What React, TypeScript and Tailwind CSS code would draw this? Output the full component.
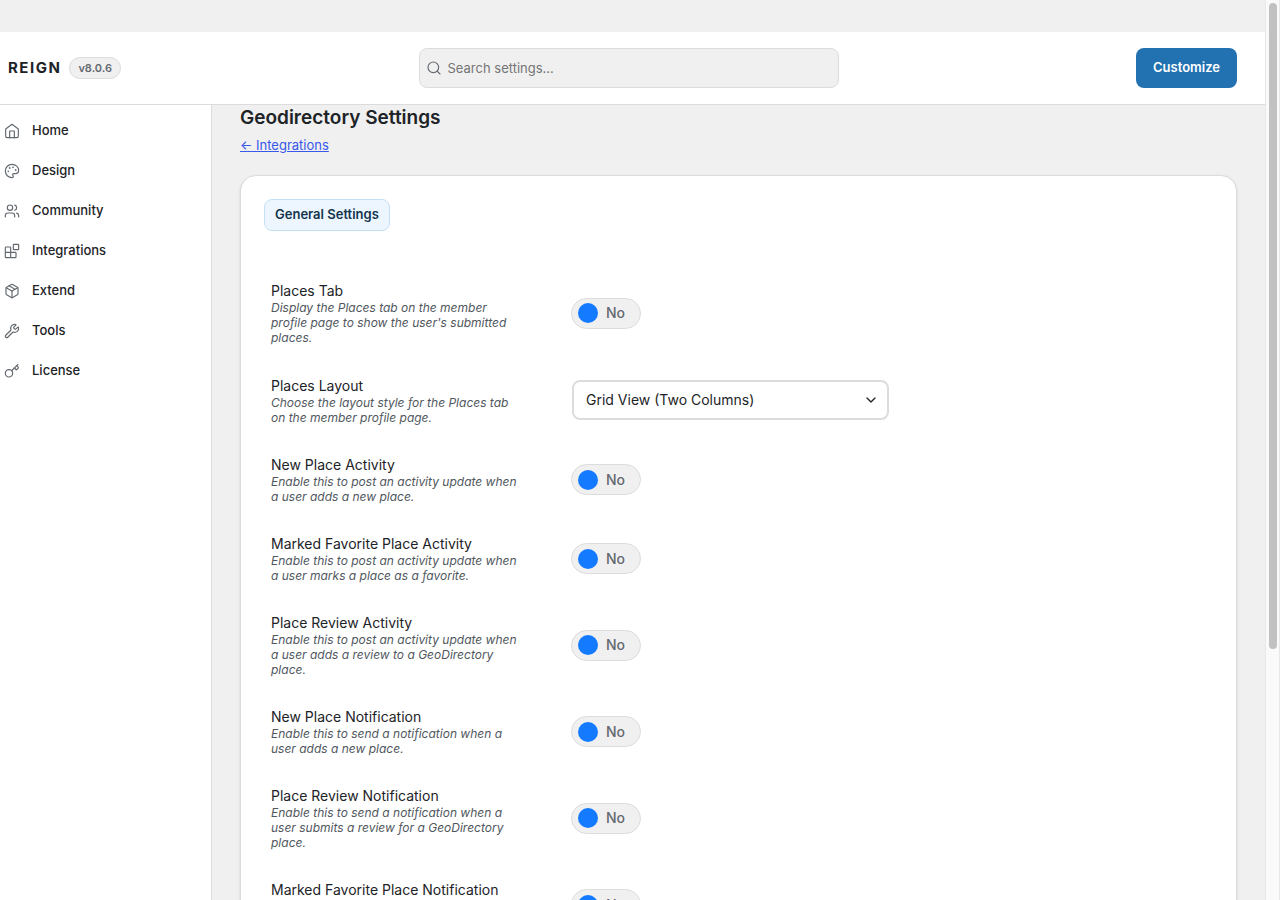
import { useState } from 'react';
import { ChevronDown, Key, Package, Palette, Search, Users, Wrench } from 'lucide-react';

type IconProps = { className?: string; strokeWidth?: number };

function HomeIcon({ className, strokeWidth }: IconProps) {
  return (
    <svg
      viewBox="0 0 24 24"
      fill="none"
      stroke="currentColor"
      strokeWidth={strokeWidth}
      strokeLinecap="round"
      strokeLinejoin="round"
      className={className}
      aria-hidden="true"
    >
      <path d="m2.5 9 9.5-7 9.5 7v11a2 2 0 0 1-2 2h-15a2 2 0 0 1-2-2z" />
      <path d="M8.5 22V12h7v10" />
    </svg>
  );
}

function BlocksIcon({ className, strokeWidth }: IconProps) {
  return (
    <svg
      viewBox="0 0 24 24"
      fill="none"
      stroke="currentColor"
      strokeWidth={strokeWidth}
      strokeLinecap="round"
      strokeLinejoin="round"
      className={className}
      aria-hidden="true"
    >
      <rect width="8" height="8" x="14" y="2" rx="1" />
      <path d="M10 22V7a1 1 0 0 0-1-1H3a1 1 0 0 0-1 1v14a1 1 0 0 0 1 1h14a1 1 0 0 0 1-1v-6a1 1 0 0 0-1-1H2" />
    </svg>
  );
}

const NAV_ITEMS = [
  { label: 'Home', icon: HomeIcon },
  { label: 'Design', icon: Palette },
  { label: 'Community', icon: Users },
  { label: 'Integrations', icon: BlocksIcon },
  { label: 'Extend', icon: Package },
  { label: 'Tools', icon: Wrench },
  { label: 'License', icon: Key },
];

type Setting = {
  id: string;
  title: string;
  description: string;
  options?: string[];
};

const SETTINGS: Setting[] = [
  {
    id: 'places-tab',
    title: 'Places Tab',
    description: "Display the Places tab on the member profile page to show the user's submitted places.",
  },
  {
    id: 'places-layout',
    title: 'Places Layout',
    description: 'Choose the layout style for the Places tab on the member profile page.',
    options: ['Grid View (Two Columns)'],
  },
  {
    id: 'new-place-activity',
    title: 'New Place Activity',
    description: 'Enable this to post an activity update when a user adds a new place.',
  },
  {
    id: 'favorite-place-activity',
    title: 'Marked Favorite Place Activity',
    description: 'Enable this to post an activity update when a user marks a place as a favorite.',
  },
  {
    id: 'place-review-activity',
    title: 'Place Review Activity',
    description: 'Enable this to post an activity update when a user adds a review to a GeoDirectory place.',
  },
  {
    id: 'new-place-notification',
    title: 'New Place Notification',
    description: 'Enable this to send a notification when a user adds a new place.',
  },
  {
    id: 'place-review-notification',
    title: 'Place Review Notification',
    description: 'Enable this to send a notification when a user submits a review for a GeoDirectory place.',
  },
  {
    id: 'favorite-place-notification',
    title: 'Marked Favorite Place Notification',
    description: 'Enable this to send a notification when a user marks a place as a favorite.',
  },
];

function Toggle({ id }: { id: string }) {
  const [checked, setChecked] = useState(false);

  return (
    <label className="relative inline-flex h-[31px] w-[70px] cursor-pointer items-center gap-2 rounded-full border border-[#dcdcde] bg-[#f0f0f0] px-[6px]">
      <input
        id={id}
        type="checkbox"
        checked={checked}
        onChange={(e) => setChecked(e.target.checked)}
        className="sr-only"
      />
      <span className="size-5 shrink-0 rounded-full bg-[#147aff]" />
      <span className="text-sm font-medium text-[#646970]">{checked ? 'Yes' : 'No'}</span>
    </label>
  );
}

function SettingRow({ setting }: { setting: Setting }) {
  return (
    <div className="flex items-center py-[15px]">
      <div className="w-[300px] shrink-0 pr-[50px]">
        <label htmlFor={setting.id} className="block text-sm leading-[19px] text-[#1d2327]">
          {setting.title}
        </label>
        <p className="text-xs leading-[15px] text-[#50575e] italic">{setting.description}</p>
      </div>
      {setting.options ? (
        <div className="relative my-[5px] w-[318px] pl-px">
          <select
            id={setting.id}
            className="block h-10 w-full appearance-none rounded-lg border-2 border-[#dcdcde] bg-white pr-8 pl-3 text-sm text-[#1d2327]"
          >
            {setting.options.map((option) => (
              <option key={option}>{option}</option>
            ))}
          </select>
          <ChevronDown className="pointer-events-none absolute top-3 right-[10px] size-4 text-[#1d2327]" />
        </div>
      ) : (
        <Toggle id={setting.id} />
      )}
    </div>
  );
}

function Header() {
  return (
    <header className="flex h-[73px] shrink-0 items-center justify-between border-b border-[#dcdcde] bg-white pr-7 pl-2">
      <div className="flex items-center gap-2">
        <span className="text-[15px] font-bold tracking-widest text-[#1d2327]">REIGN</span>
        <span className="rounded-full border border-[#dcdcde] bg-[#f0f0f0] px-2 text-[11px] leading-5 font-semibold text-[#646970]">
          v8.0.6
        </span>
      </div>
      <div className="relative w-[420px]">
        <Search className="absolute top-3 left-[7px] size-4 text-[#646970]" strokeWidth={1.75} />
        <input
          type="search"
          aria-label="Search settings"
          placeholder="Search settings..."
          className="block h-10 w-full rounded-lg border border-[#dcdcde] bg-[#f0f0f0] pr-3 pl-7 text-[13px] text-[#1d2327] placeholder:text-[#757575]"
        />
      </div>
      <button type="button" className="h-10 rounded-lg bg-[#2271b1] px-[17px] text-[13px] font-semibold text-white">
        Customize
      </button>
    </header>
  );
}

function Sidebar() {
  return (
    <nav className="w-[212px] shrink-0 border-r border-[#dcdcde] bg-white pt-[6px]">
      {NAV_ITEMS.map(({ label, icon: Icon }) => (
        <a
          key={label}
          href="#"
          className="flex h-10 items-center gap-3 pl-1 text-[13px] font-medium text-[#1d2327]"
        >
          <Icon className="size-4 text-[#646970]" strokeWidth={1.75} />
          {label}
        </a>
      ))}
    </nav>
  );
}

export default function App() {
  return (
    <div className="flex h-screen overflow-hidden bg-[#f0f0f0] font-['Inter',sans-serif]">
      <div className="flex min-w-0 flex-1 flex-col pt-8">
        <Header />
        <div className="flex min-h-0 flex-1">
          <Sidebar />
          <main className="min-w-0 flex-1 overflow-hidden px-7">
            <h1 className="text-[19px] leading-[26px] font-semibold text-[#1d2327]">Geodirectory Settings</h1>
            <a href="#" className="mt-1 block w-fit text-[13px] leading-5 text-[#3858e9] underline">
              ← Integrations
            </a>
            <section className="mt-5 rounded-2xl border border-[#dcdcde] bg-white p-[23px] shadow-sm">
              <button
                type="button"
                className="h-8 rounded-lg border border-[#c5e0f5] bg-[#edf6ff] px-[10px] text-[13px] font-semibold text-[#12344d]"
              >
                General Settings
              </button>
              <div className="mt-[35px] pl-[7px]">
                {SETTINGS.map((setting) => (
                  <SettingRow key={setting.id} setting={setting} />
                ))}
              </div>
            </section>
          </main>
        </div>
      </div>
      {/* Scrollbar */}
      <div className="w-[15px] shrink-0 border-x border-[#e8e8e8] bg-[#fafafa] px-[3px] pt-[3px]">
        <div className="h-[72%] w-2 rounded-full bg-[#c1c1c1]" />
      </div>
    </div>
  );
}
